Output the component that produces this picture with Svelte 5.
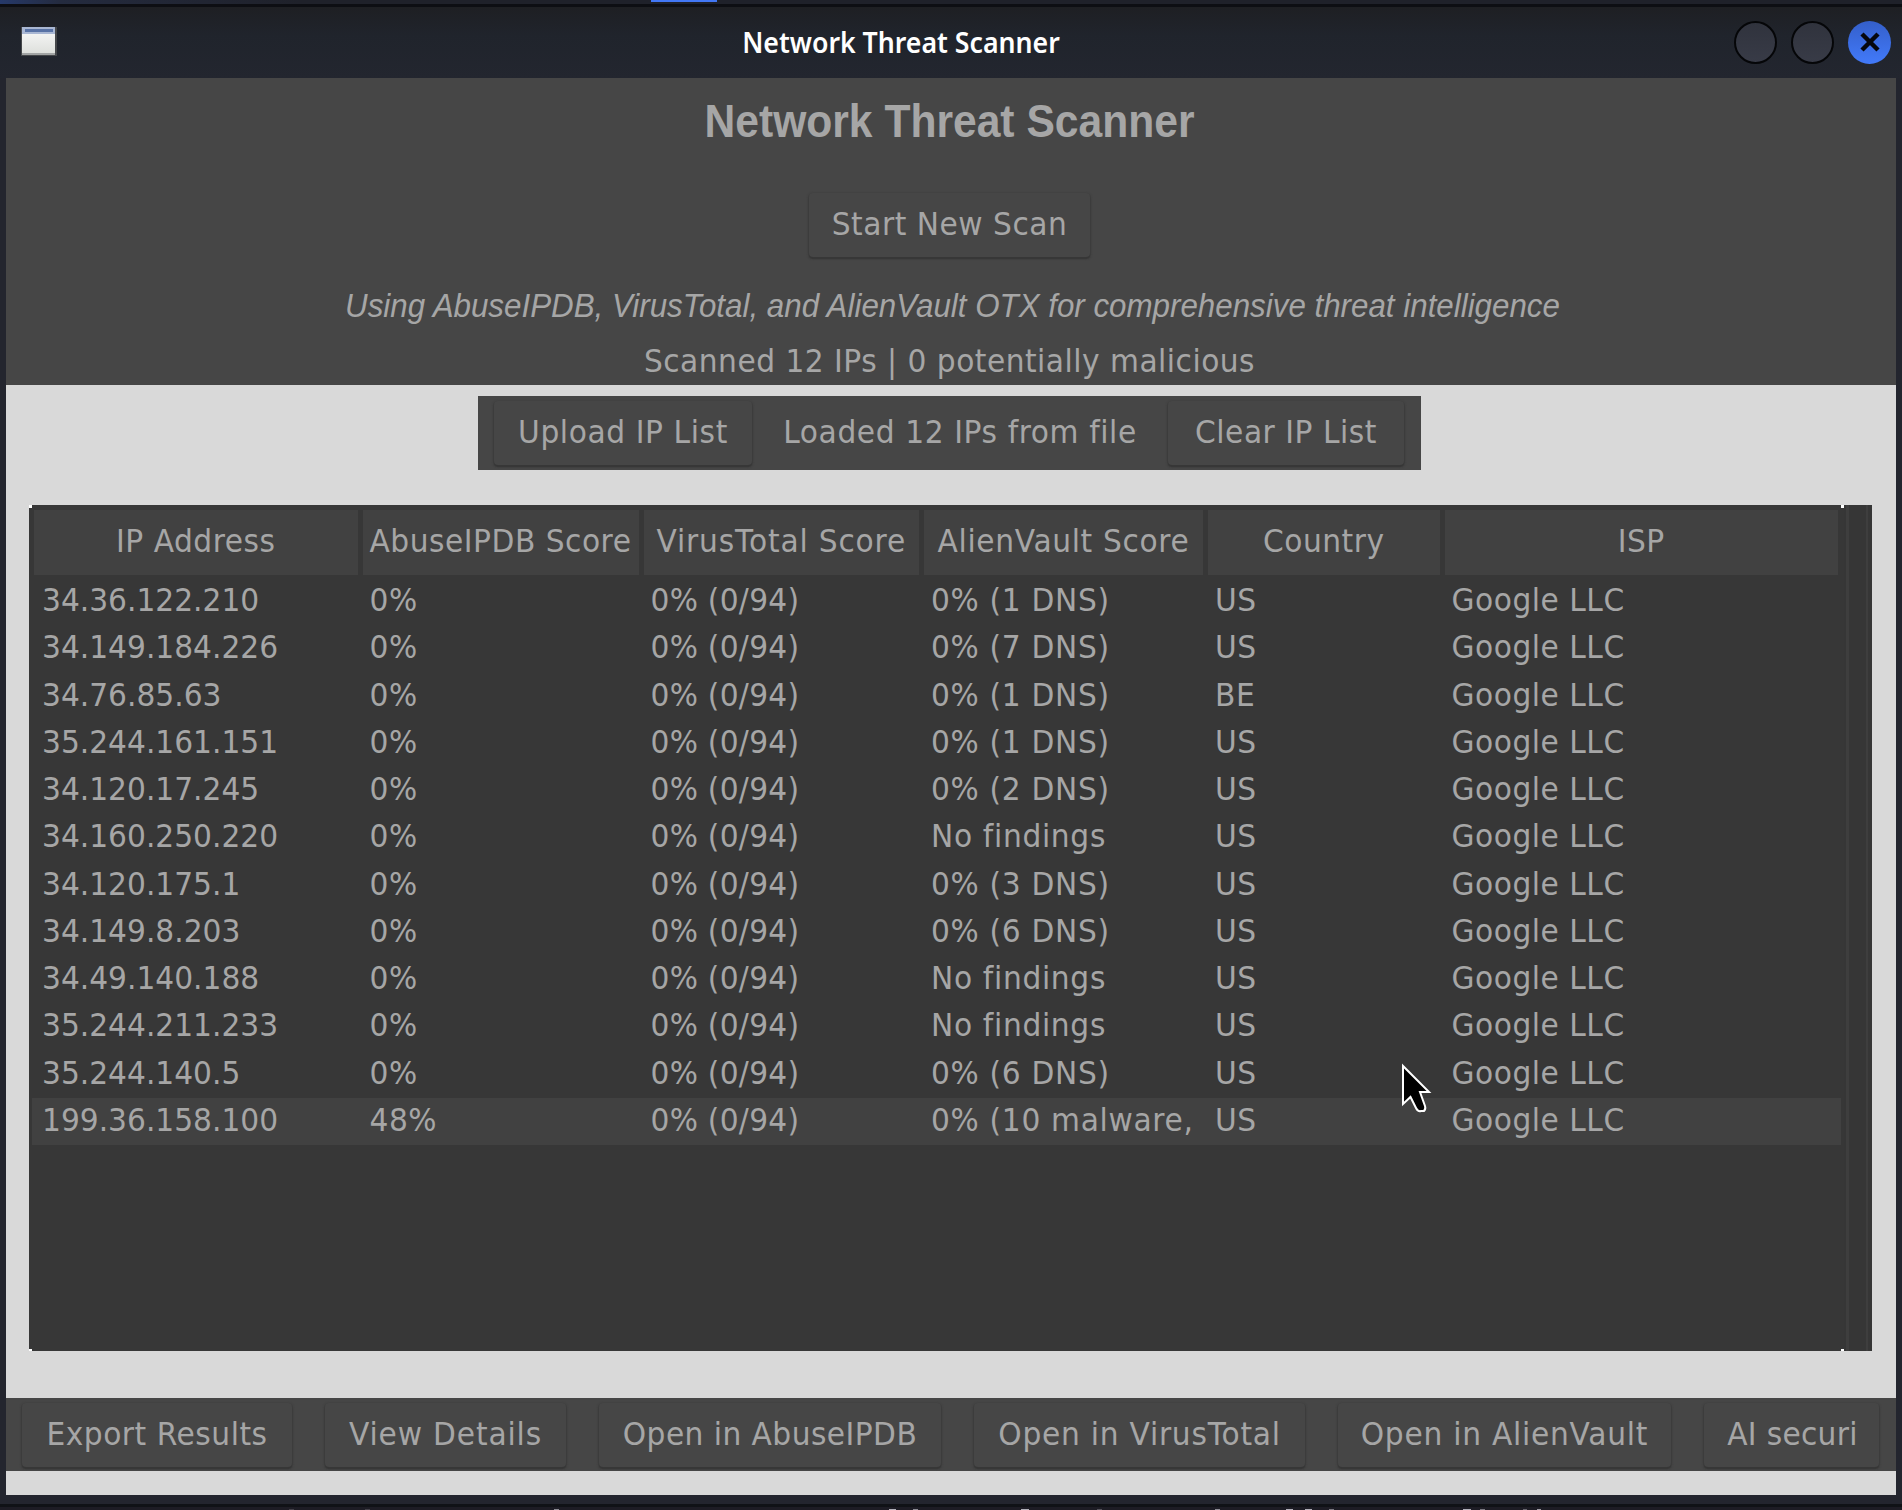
<script>
  const columns = [
    { label: 'IP Address', key: 'ip' },
    { label: 'AbuseIPDB Score', key: 'abuse-score' },
    { label: 'VirusTotal Score', key: 'virus-score' },
    { label: 'AlienVault Score', key: 'alien-score' },
    { label: 'Country', key: 'country' },
    { label: 'ISP', key: 'isp' }
  ];
  const results = [
    ['34.36.122.210', '0%', '0% (0/94)', '0% (1 DNS)', 'US', 'Google LLC'],
    ['34.149.184.226', '0%', '0% (0/94)', '0% (7 DNS)', 'US', 'Google LLC'],
    ['34.76.85.63', '0%', '0% (0/94)', '0% (1 DNS)', 'BE', 'Google LLC'],
    ['35.244.161.151', '0%', '0% (0/94)', '0% (1 DNS)', 'US', 'Google LLC'],
    ['34.120.17.245', '0%', '0% (0/94)', '0% (2 DNS)', 'US', 'Google LLC'],
    ['34.160.250.220', '0%', '0% (0/94)', 'No findings', 'US', 'Google LLC'],
    ['34.120.175.1', '0%', '0% (0/94)', '0% (3 DNS)', 'US', 'Google LLC'],
    ['34.149.8.203', '0%', '0% (0/94)', '0% (6 DNS)', 'US', 'Google LLC'],
    ['34.49.140.188', '0%', '0% (0/94)', 'No findings', 'US', 'Google LLC'],
    ['35.244.211.233', '0%', '0% (0/94)', 'No findings', 'US', 'Google LLC'],
    ['35.244.140.5', '0%', '0% (0/94)', '0% (6 DNS)', 'US', 'Google LLC'],
    ['199.36.158.100', '48%', '0% (0/94)', '0% (10 malware,', 'US', 'Google LLC']
  ];
  const selected = 11;
  const actions = [
    { label: 'Export Results', size: 'export' },
    { label: 'View Details', size: 'details' },
    { label: 'Open in AbuseIPDB', size: 'abuse' },
    { label: 'Open in VirusTotal', size: 'virus' },
    { label: 'Open in AlienVault', size: 'alien' },
    { label: 'AI securi', size: 'ai' }
  ];
  // Bright bits of the window behind, showing under the frame: [x, width, opacity]
  const specks = [
    [289, 5, 0.2], [365, 5, 0.2], [554, 5, 0.6], [889, 7, 0.8], [913, 5, 0.6], [1021, 8, 0.8],
    [1097, 5, 0.3], [1215, 5, 0.6], [1286, 7, 0.8], [1305, 7, 0.8], [1329, 5, 0.5],
    [1463, 8, 0.8], [1480, 5, 0.5], [1523, 4, 0.4], [1537, 4, 0.7]
  ];
</script>

<div class="screen">
  <div class="desktop-top"><i class="accent"></i></div>
  <header class="titlebar">
    <svg class="app-icon" width="36" height="30" viewBox="0 0 36 30">
      <defs>
        <linearGradient id="page" x1="0" y1="0" x2="0" y2="1">
          <stop offset="0" stop-color="#fafafa" />
          <stop offset="1" stop-color="#dcdeda" />
        </linearGradient>
      </defs>
      <rect x="0" y="0" width="36" height="29" fill="#45474a" />
      <rect x="1" y="0" width="33" height="28" fill="url(#page)" />
      <rect x="1" y="0" width="33" height="7" fill="#a9b7d3" />
      <rect x="4" y="2" width="28" height="3" fill="#5872a5" />
      <rect x="1" y="26" width="33" height="2" fill="#a2a4a4" />
    </svg>
    <span class="window-title stretch">Network Threat Scanner</span>
    <div class="controls">
      <i class="control"></i>
      <i class="control"></i>
      <i class="control close">
        <svg width="20" height="20" viewBox="0 0 20 20">
          <path d="M2 2 L18 18 M18 2 L2 18" stroke="#06070c" stroke-width="4.5" />
        </svg>
      </i>
    </div>
  </header>

  <main class="window">
    <section class="intro">
      <h1><span class="stretch">Network Threat Scanner</span></h1>
      <button class="btn start"><span class="stretch">Start New Scan</span></button>
      <p class="tagline"><span class="stretch">Using AbuseIPDB, VirusTotal, and AlienVault OTX for comprehensive threat intelligence</span></p>
      <p class="status"><span class="stretch">Scanned 12 IPs | 0 potentially malicious</span></p>
    </section>

    <section class="toolbar">
      <button class="btn upload"><span class="stretch">Upload IP List</span></button>
      <p class="loaded"><span class="stretch">Loaded 12 IPs from file</span></p>
      <button class="btn clear"><span class="stretch">Clear IP List</span></button>
    </section>

    <section class="results">
      <div class="tree">
        <i class="corner top left"></i>
        <i class="corner top right"></i>
        <i class="corner bottom left"></i>
        <i class="corner bottom right"></i>
        <div class="grid head">
          {#each columns as column}
            <div class="th {column.key}"><span class="stretch">{column.label}</span></div>
          {/each}
        </div>
        {#each results as row, i}
          <div class="grid row" class:selected={i === selected}>
            {#each row as value, c}
              <div class="td {columns[c].key}"><span class="stretch">{value}</span></div>
            {/each}
          </div>
        {/each}
      </div>
      <div class="scrollbar"><i class="groove"></i></div>
    </section>

    <footer class="actions">
      {#each actions as action}
        <button class="btn {action.size}"><span class="stretch">{action.label}</span></button>
      {/each}
    </footer>
  </main>
  <div class="desktop-bottom">
    <svg class="specks" width="1902" height="3" viewBox="0 0 1902 3">
      {#each specks as [x, width, opacity]}
        <rect {x} y="2" {width} height="1" fill="#d5d3dc" {opacity} />
      {/each}
    </svg>
  </div>

  <svg class="pointer" width="34" height="54" viewBox="0 0 34 54">
    <path d="M2 3 V41 L9.500 34 L15 45 Q17 49 20 48 H23 Q25 46 24 43 L19 29 H28 Z" fill="#000" stroke="#fff" stroke-width="2" />
  </svg>
</div>

<style>
  :global(body) {
    margin: 0;
    background: #17181e;
  }
  .screen {
    position: relative;
    box-sizing: border-box;
    width: 1902px;
    height: 1510px;
    overflow: hidden;
    display: flex;
    flex-direction: column;
    background: #23252e;
    color: #a6a6a6;
    font: 29.7px/36px 'DejaVu Sans', sans-serif;
    font-variant-ligatures: none;
    letter-spacing: 0.52px;
    white-space: nowrap;
  }
  .stretch {
    display: inline-block;
    transform: scaleY(1.09);
  }
  h1,
  p {
    margin: 0;
  }
  .desktop-top {
    height: 4px;
    flex: none;
    background: linear-gradient(90deg, #26396a 0, #242b3f 60px, #1f212a 300px);
    border-bottom: 3px solid #0d0e13;
  }
  .accent {
    display: block;
    width: 66px;
    height: 2px;
    margin-left: 651px;
    background: #4277f5;
  }
  .titlebar {
    flex: none;
    height: 71px;
    box-sizing: border-box;
    padding: 0 11px 1px 21px;
    display: grid;
    grid-template-columns: 70px 1fr 180px;
    align-items: center;
    background: linear-gradient(#1e1f23, #20242c 40%, #23262f);
  }
  .window-title {
    justify-self: center;
    color: #fff;
    font: 600 26.7px/36px 'Noto Sans', sans-serif;
    letter-spacing: 0;
  }
  .controls {
    justify-self: end;
    display: flex;
    gap: 14px;
  }
  .control {
    box-sizing: border-box;
    width: 43px;
    height: 43px;
    border: 2px solid #050608;
    border-radius: 50%;
    background: linear-gradient(#30333d, #383b47);
    display: grid;
    place-items: center;
  }
  .close {
    border: 0;
    background: linear-gradient(#345fca, #427afa);
  }
  .window {
    flex: none;
    box-sizing: border-box;
    height: 1417px;
    margin: 0 6px;
    background: #d9d9d9;
    display: flex;
    flex-direction: column;
    align-items: center;
  }
  .intro {
    box-sizing: border-box;
    width: 100%;
    height: 307px;
    padding-right: 3px;
    background: #464646;
    display: flex;
    flex-direction: column;
    align-items: center;
  }
  h1 {
    margin-top: 17px;
    height: 53px;
    font: bold 42.6px/52px 'Liberation Sans', sans-serif;
    letter-spacing: 0;
  }
  .btn {
    flex: none;
    box-sizing: border-box;
    height: 64px;
    padding: 0 0 3px;
    border: 0;
    border-radius: 4px;
    background: #464646;
    color: inherit;
    font: inherit;
    letter-spacing: inherit;
    text-align: center;
    box-shadow: 0 2px 1px #373737, 0 1px 2px 1px #3b3b3b;
  }
  .start {
    width: 281px;
    margin-top: 45px;
  }
  .tagline {
    margin: 31px 0 0 6px;
    font: italic 31.32px/36px 'Liberation Sans', sans-serif;
    letter-spacing: 0;
  }
  .status {
    margin-top: 19px;
    letter-spacing: 0.49px;
  }
  .toolbar {
    box-sizing: border-box;
    width: 943px;
    height: 74px;
    margin: 11px 3px 0 0;
    padding: 5px 17px 0 16px;
    overflow: hidden;
    display: flex;
    justify-content: space-between;
    background: #464646;
  }
  .upload {
    width: 258px;
    letter-spacing: 0.6px;
  }
  .clear {
    width: 236px;
  }
  .loaded {
    padding-top: 13px;
    letter-spacing: 0.6px;
  }
  .results {
    width: 1843px;
    height: 846px;
    margin: 35px 1px 0 0;
    display: flex;
    background: #373737;
  }
  .tree {
    position: relative;
    box-sizing: border-box;
    width: 1815px;
    padding: 2px 0 0 3px;
  }
  .corner {
    position: absolute;
    width: 3px;
    height: 3px;
    background: #fff;
  }
  .top {
    top: 0;
  }
  .bottom {
    bottom: 0;
    height: 2px;
  }
  .left {
    left: 0;
  }
  .right {
    right: 0;
  }
  .grid {
    display: grid;
    grid-template-columns: 328.5px 281px 280.5px 284px 236.5px 398.5px;
  }
  .head {
    height: 71px;
  }
  .th {
    margin: 3px 3px 3px 2px;
    padding-top: 13px;
    background: #414141;
    text-align: center;
  }
  .th.virus-score {
    letter-spacing: 0.83px;
  }
  .th.alien-score {
    letter-spacing: 0.66px;
  }
  .row {
    width: 1809px;
    height: 47.27px;
  }
  .selected {
    background: #414141;
  }
  .td {
    padding: 4px 0 0 9px;
  }
  .td.ip {
    padding-left: 10px;
    letter-spacing: 0;
  }
  .td.virus-score {
    letter-spacing: 0.27px;
  }
  .td.alien-score {
    letter-spacing: 0.68px;
  }
  .scrollbar {
    flex: 1;
    padding-left: 2px;
    background: #363636;
  }
  .groove {
    box-sizing: border-box;
    display: block;
    width: 22px;
    height: 100%;
    border-left: 3px solid #3e3e3e;
    border-right: 2px solid #3e3e3e;
  }
  .actions {
    box-sizing: border-box;
    width: 100%;
    height: 73px;
    margin-top: 47px;
    padding: 5px 0 0 16px;
    overflow: hidden;
    display: flex;
    gap: 33px;
    background: #464646;
  }
  .export {
    width: 270px;
  }
  .details {
    width: 241px;
    letter-spacing: 0.85px;
  }
  .abuse {
    width: 342px;
    letter-spacing: 0.45px;
  }
  .virus {
    width: 331px;
    letter-spacing: 0.75px;
  }
  .alien {
    width: 333px;
    letter-spacing: 0.75px;
  }
  .ai {
    width: 175px;
    padding-left: 2px;
    letter-spacing: 0.3px;
  }
  .desktop-bottom {
    margin-top: 9px;
    flex: 1;
    border-top: 3px solid #101216;
    background: #1d1c24;
  }
  .specks {
    display: block;
  }
  .pointer {
    position: absolute;
    left: 1401px;
    top: 1063px;
  }
</style>
